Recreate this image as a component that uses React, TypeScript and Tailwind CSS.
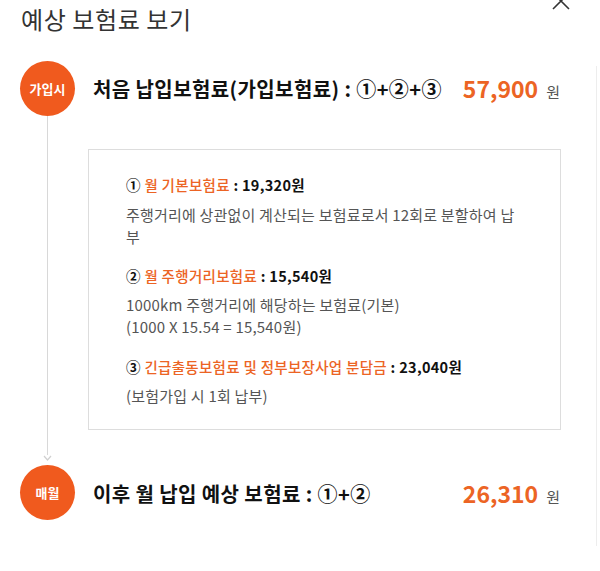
const orange = "text-[#ec6424]";

function Circle({ label }: { label: string }) {
  return (
    <div className="w-[55px] h-[55px] shrink-0 rounded-full bg-[#f05a1e] flex items-center justify-center text-white text-[13px] font-bold leading-none">
      {label}
    </div>
  );
}

function Price({ value }: { value: string }) {
  return (
    <div className="flex items-baseline gap-[8px] pr-[1px]">
      <span className={`${orange} text-[23px] font-bold leading-none`}>{value}</span>
      <span className="text-[15px] text-[#555] leading-none">원</span>
    </div>
  );
}

export default function App() {
  return (
    <div
      className="relative w-[600px] h-[571px] bg-white overflow-hidden"
      style={{ fontFamily: '"Noto Sans CJK KR", "Noto Sans", sans-serif' }}
    >
      {/* 닫기 버튼 (위쪽이 잘린 상태) */}
      <svg className="absolute left-[551px] top-[-9px]" width="20" height="20" viewBox="0 0 20 20">
        <path d="M2 2 L18 18 M18 2 L2 18" stroke="#333" strokeWidth="1.6" fill="none" />
      </svg>

      {/* 오른쪽 스크롤 영역 라인 */}
      <div className="absolute left-[596px] top-[66px] h-[480px] w-px bg-[#ededed]" />

      <h1 className="pl-[21px] pt-[3px] h-[61px] text-[24px] leading-[32px] tracking-[0.6px] text-[#333] font-normal">
        예상 보험료 보기
      </h1>

      <div className="flex pl-[20px] pr-[39px]">
        {/* 타임라인 */}
        <div className="w-[55px] flex flex-col items-center">
          <Circle label="가입시" />
          <div className="flex-1 w-px bg-[#d8d8d8] mr-[1px]" />
          <svg width="9" height="6" viewBox="0 0 9 6" className="mr-[1px] mb-[4px]">
            <path d="M1 1 L4.5 5 L8 1" stroke="#d0d0d0" strokeWidth="1.2" fill="none" />
          </svg>
          <Circle label="매월" />
        </div>

        <div className="ml-[13px] flex-1 flex flex-col">
          <div className="h-[55px] flex items-center justify-between pl-[5px]">
            <span className="text-[20px] font-bold text-[#111] tracking-[0.4px]">
              처음 납입보험료(가입보험료) : ①+②+③
            </span>
            <Price value="57,900" />
          </div>

          <div className="mt-[33px] border border-[#dddddd] pl-[37px] pr-[20px] pt-[24px] pb-[22px] text-[15px] tracking-[0.2px] text-[#555]">
            <div className="leading-[22px] text-[14.5px] tracking-[0.3px] font-bold text-[#111]">
              ① <span className={`${orange} font-medium`}>월 기본보험료</span> : 19,320원
            </div>
            <p className="mt-[8px] leading-[22px]">
              주행거리에 상관없이 계산되는 보험료로서 12회로 분할하여 납
              <br />부
            </p>

            <div className="mt-[17px] leading-[22px] text-[14.5px] tracking-[0.3px] font-bold text-[#111]">
              ② <span className={`${orange} font-medium`}>월 주행거리보험료</span> : 15,540원
            </div>
            <p className="mt-[7px] leading-[22px]">
              1000km 주행거리에 해당하는 보험료(기본)
              <br />
              (1000 X 15.54 = 15,540원)
            </p>

            <div className="mt-[18px] leading-[22px] text-[14.5px] tracking-[0.3px] font-bold text-[#111]">
              ③ <span className={`${orange} font-medium`}>긴급출동보험료 및 정부보장사업 분담금</span> : 23,040원
            </div>
            <p className="mt-[7px] leading-[22px]">(보험가입 시 1회 납부)</p>
          </div>

          <div className="mt-[37px] h-[53px] flex items-center justify-between pl-[5px]">
            <span className="text-[20px] font-bold text-[#111] tracking-[0.4px]">
              이후 월 납입 예상 보험료 : ①+②
            </span>
            <Price value="26,310" />
          </div>
        </div>
      </div>
    </div>
  );
}
